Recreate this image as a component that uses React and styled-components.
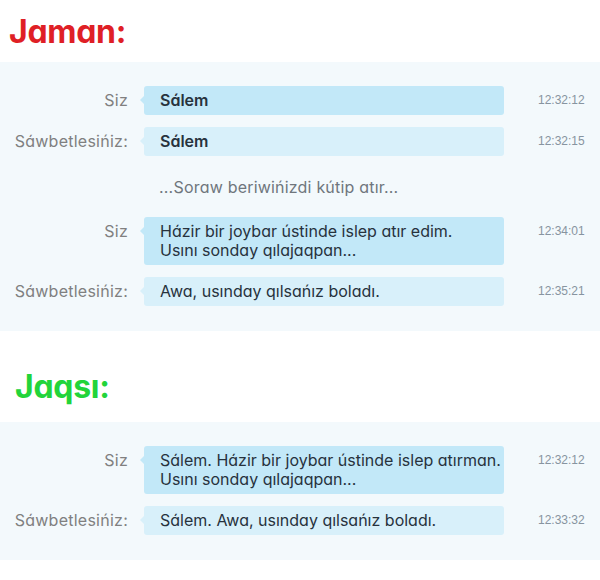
import React from 'react';
import styled, { createGlobalStyle } from 'styled-components';

const GlobalStyle = createGlobalStyle`
    body {
        margin: 0;
        background: #ffffff;
        font-family: Inter, 'Noto Sans', sans-serif;
        font-feature-settings: 'cv11';
    }
`;

const Page = styled.div`
    width: 600px;
`;

const Heading = styled.h2`
    box-sizing: border-box;
    margin: 0;
    height: ${(p) => p.$height}px;
    padding: ${(p) => p.$top}px ${(p) => p.$left}px 0;
    font-size: 32px;
    line-height: 1;
    font-weight: 700;
    letter-spacing: -0.3px;
    color: ${(p) => p.$color};
`;

const Panel = styled.div`
    background: #f3f9fc;
    padding: 24px 0 25px;
    display: flex;
    flex-direction: column;
    gap: 12px;
`;

const Row = styled.div`
    display: grid;
    grid-template-columns: 128px 360px 1fr;
    column-gap: 16px;
    align-items: start;
`;

const Label = styled.div`
    text-align: right;
    padding-top: 5px;
    font-size: 16px;
    letter-spacing: 0.25px;
    line-height: 19px;
    color: #808080;
    white-space: nowrap;
`;

const Bubble = styled.div`
    position: relative;
    box-sizing: border-box;
    padding: 5px 10px 5px 16px;
    border-radius: 3px;
    background: ${(p) => (p.$mine ? '#c2e8f8' : '#d8f0fa')};
    color: #27323d;
    font-size: 16px;
    line-height: 19px;
    font-weight: ${(p) => (p.$bold ? 600 : 400)};
    white-space: nowrap;

    &:before {
        content: '';
        position: absolute;
        left: -4px;
        top: 10px;
        border-top: 4px solid transparent;
        border-bottom: 4px solid transparent;
        border-right: 4px solid ${(p) => (p.$mine ? '#c2e8f8' : '#d8f0fa')};
    }
`;

const Time = styled.div`
    padding: 5px 0 0 18px;
    font-family: 'Liberation Sans', Arial, sans-serif;
    font-size: 12px;
    line-height: 19px;
    color: #8794a0;
`;

const Typing = styled.div`
    grid-column: 2;
    padding: 10px 0 8px 15px;
    font-size: 16px;
    letter-spacing: 0.2px;
    line-height: 19px;
    color: #6f767d;
    white-space: nowrap;
`;

const BAD = [
    { who: 'Siz', mine: true, bold: true, text: ['Sálem'], time: '12:32:12' },
    { who: 'Sáwbetlesińiz:', bold: true, text: ['Sálem'], time: '12:32:15' },
    { typing: '...Soraw beriwińizdi kútip atır...' },
    { who: 'Siz', mine: true, text: ['Házir bir joybar ústinde islep atır edim.', 'Usını sonday qılajaqpan...'], time: '12:34:01' },
    { who: 'Sáwbetlesińiz:', text: ['Awa, usınday qılsańız boladı.'], time: '12:35:21' },
];

const GOOD = [
    { who: 'Siz', mine: true, text: ['Sálem. Házir bir joybar ústinde islep atırman.', 'Usını sonday qılajaqpan...'], time: '12:32:12' },
    { who: 'Sáwbetlesińiz:', text: ['Sálem. Awa, usınday qılsańız boladı.'], time: '12:33:32' },
];

const Chat = ({ messages }) => (
    <Panel>
        {messages.map((m, i) => (
            <Row key={i}>
                {m.typing ? (
                    <Typing>{m.typing}</Typing>
                ) : (
                    <>
                        <Label>{m.who}</Label>
                        <Bubble $mine={m.mine} $bold={m.bold}>
                            {m.text.map((line) => <div key={line}>{line}</div>)}
                        </Bubble>
                        <Time>{m.time}</Time>
                    </>
                )}
            </Row>
        ))}
    </Panel>
);

export default function App() {
    return (
        <Page>
            <GlobalStyle />
            <Heading $color='#df1f26' $height={62} $top={16} $left={9}>Jaman:</Heading>
            <Chat messages={BAD} />
            <Heading $color='#22d43a' $height={91} $top={40} $left={15}>Jaqsı:</Heading>
            <Chat messages={GOOD} />
        </Page>
    );
}
